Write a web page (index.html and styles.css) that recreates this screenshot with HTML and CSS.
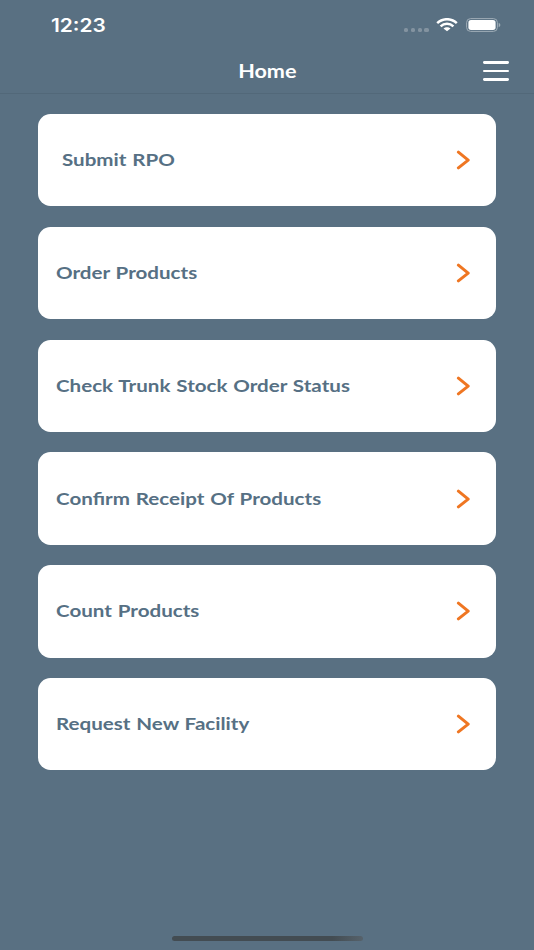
FILE: index.html
```html
<!DOCTYPE html>
<html lang="en">
<head>
<meta charset="utf-8">
<title>Home</title>
<link rel="stylesheet" href="styles.css">
</head>
<body>
<div class="status">
  <span class="time">12:23</span>
  <div class="indicators">
    <div class="dots"><i></i><i></i><i></i><i></i></div>
    <svg class="wifi" width="22" height="14" viewBox="0 0 22 14" fill="none" stroke="#fff" stroke-width="2.5"><path d="M1.2 5.1C6.7-.1 15.3-.1 20.8 5.1"/><path d="M4.6 8.4C8.2 5 13.8 5 17.4 8.4"/><path d="M11 13.3L7.5 10.4C9.4 8.7 12.6 8.7 14.5 10.4Z" fill="#fff" stroke="none"/></svg>
    <svg class="battery" width="35" height="14" viewBox="0 0 35 14"><rect x=".6" y=".6" width="30.8" height="12.8" rx="4" fill="none" stroke="#9fadb7" stroke-width="1"/><rect x="2.4" y="2.1" width="27.2" height="9.8" rx="2.6" fill="#fff"/><path d="M32.7 4.8Q34.4 5.5 34.4 7T32.7 9.2Z" fill="#9fadb7"/></svg>
  </div>
</div>
<header class="header">
  <h1><span>Home</span></h1>
  <button class="menu" aria-label="Menu"><i></i><i></i><i></i></button>
</header>
<main class="cards">
  <a class="card indented"><span class="label">Submit RPO</span><svg class="chevron" viewBox="0 0 14 20"><path d="M2.4 2.2L12.2 10.1L2.4 17.9"/></svg></a>
  <a class="card"><span class="label">Order Products</span><svg class="chevron" viewBox="0 0 14 20"><path d="M2.4 2.2L12.2 10.1L2.4 17.9"/></svg></a>
  <a class="card"><span class="label">Check Trunk Stock Order Status</span><svg class="chevron" viewBox="0 0 14 20"><path d="M2.4 2.2L12.2 10.1L2.4 17.9"/></svg></a>
  <a class="card"><span class="label">Confirm Receipt Of Products</span><svg class="chevron" viewBox="0 0 14 20"><path d="M2.4 2.2L12.2 10.1L2.4 17.9"/></svg></a>
  <a class="card"><span class="label">Count Products</span><svg class="chevron" viewBox="0 0 14 20"><path d="M2.4 2.2L12.2 10.1L2.4 17.9"/></svg></a>
  <a class="card"><span class="label">Request New Facility</span><svg class="chevron" viewBox="0 0 14 20"><path d="M2.4 2.2L12.2 10.1L2.4 17.9"/></svg></a>
</main>
<footer class="home-bar"><div></div></footer>
</body>
</html>
```
FILE: styles.css
```css
* { box-sizing: border-box; }
body {
  margin: 0;
  height: 950px;
  display: flex;
  flex-direction: column;
  overflow: hidden;
  background: #597082;
  color: #fff;
  font-family: Lato, "Open Sans", sans-serif;
}
.status {
  height: 49px;
  padding: 2px 33.5px 0 51px;
  display: flex;
  align-items: center;
  justify-content: space-between;
}
.time {
  font: 600 18px/24px Inter, sans-serif;
  transform: scaleX(1.16);
  transform-origin: left;
}
.indicators { display: flex; align-items: center; margin-top: -2px; }
.dots { display: flex; gap: 2.6px; margin: 10px 7px 0 0; }
.dots i { width: 4.2px; height: 4px; border-radius: 1.6px; background: #8393a0; }
.wifi { margin-right: 8px; }
.header {
  height: 45px;
  padding: 0 25px 0 51px;
  display: grid;
  grid-template-columns: 1fr auto;
  align-items: center;
  border-bottom: 1px solid #526879;
}
.header h1 {
  margin: 0;
  grid-area: 1 / 1 / 2 / 3;
  padding-right: 26px;
  text-align: center;
  font-size: 18px;
  line-height: 24px;
}
.header h1 span { display: inline-block; transform: scaleX(1.2); }
.menu {
  grid-area: 1 / 2;
  width: 26px;
  padding: 0;
  border: 0;
  background: none;
  display: flex;
  flex-direction: column;
  gap: 5.4px;
}
.menu i { height: 2.8px; border-radius: 1.4px; background: #fff; }
.cards {
  flex: 1;
  padding: 20px 37.6px 0;
  display: flex;
  flex-direction: column;
  gap: 20.4px;
}
.card {
  height: 92.4px;
  padding: 0 26px 0 18.6px;
  display: flex;
  align-items: center;
  justify-content: space-between;
  border-radius: 12.5px;
  background: #fff;
  color: #567084;
}
.indented { padding-left: 24.2px; }
.label {
  font-size: 17px;
  line-height: 24px;
  font-weight: 700;
  word-spacing: 0.7px;
  white-space: nowrap;
  transform: scaleX(1.21);
  transform-origin: left;
}
.chevron {
  width: 14px;
  height: 20px;
  fill: none;
  stroke: #ef7622;
  stroke-width: 3;
  stroke-linecap: round;
  stroke-linejoin: round;
}
.home-bar { height: 14px; display: flex; justify-content: center; }
.home-bar div {
  width: 191px;
  height: 5.4px;
  border-radius: 3px;
  background: linear-gradient(90deg, #434c52 0%, #434c52 84%, #56626b 100%);
}
```
